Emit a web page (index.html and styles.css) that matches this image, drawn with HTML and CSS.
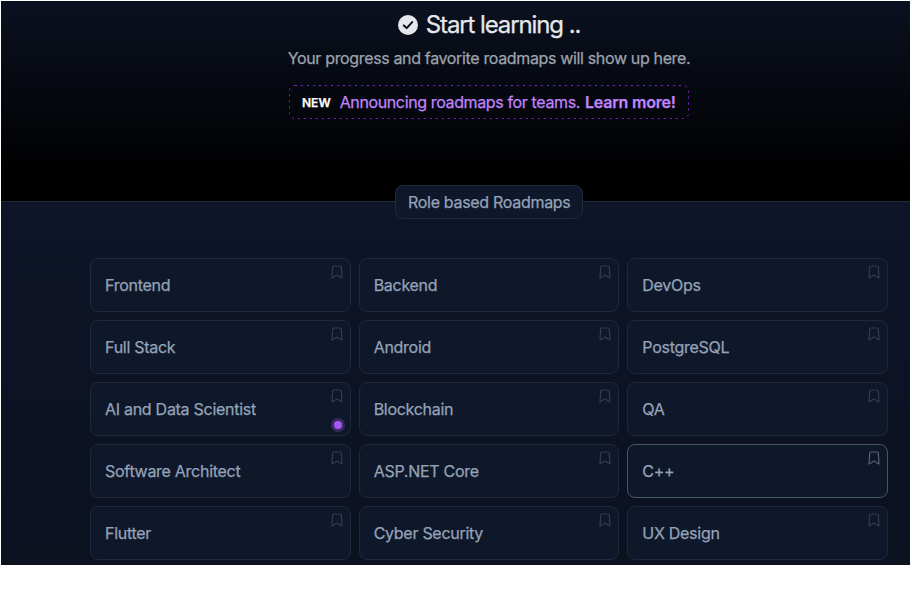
FILE: index.html
```html
<!DOCTYPE html>
<html lang="en">
<head>
<meta charset="utf-8">
<title>Developer Roadmaps</title>
<link rel="stylesheet" href="styles.css">
</head>
<body>
<svg class="defs" width="0" height="0" aria-hidden="true">
  <symbol id="bookmark" viewBox="0 0 24 24"><path d="m19.5 21-7.500-4.500-7.500 4.500L5.500 5a2 2 0 0 1 2-2h9a2 2 0 0 1 2 2z"/></symbol>
</svg>
<main class="page">
  <header class="hero">
    <h1 class="title">
      <svg class="check" viewBox="0 0 20 20"><circle cx="10" cy="10" r="10"/><path d="M5.8 10.4 8.7 13.1 14.2 7.1"/></svg>
      <span>Start learning ..</span>
    </h1>
    <p class="subtitle">Your progress and favorite roadmaps will show up here.</p>
    <a class="announce"><svg class="outline" viewBox="0 0 400 34"><rect x=".5" y=".5" width="399" height="33" rx="5.500"/></svg><span class="new">NEW</span><span class="message">Announcing roadmaps for teams.</span><b class="more">Learn more!</b></a>
  </header>
  <section class="roadmaps">
    <h2 class="heading">Role based Roadmaps</h2>
    <div class="grid">
      <a class="card"><span>Frontend</span><svg class="mark"><use href="#bookmark"/></svg></a>
      <a class="card"><span>Backend</span><svg class="mark"><use href="#bookmark"/></svg></a>
      <a class="card"><span>DevOps</span><svg class="mark"><use href="#bookmark"/></svg></a>
      <a class="card"><span>Full Stack</span><svg class="mark"><use href="#bookmark"/></svg></a>
      <a class="card"><span>Android</span><svg class="mark"><use href="#bookmark"/></svg></a>
      <a class="card"><span>PostgreSQL</span><svg class="mark"><use href="#bookmark"/></svg></a>
      <a class="card"><span>AI and Data Scientist</span><svg class="mark"><use href="#bookmark"/></svg><i class="dot"></i></a>
      <a class="card"><span>Blockchain</span><svg class="mark"><use href="#bookmark"/></svg></a>
      <a class="card"><span>QA</span><svg class="mark"><use href="#bookmark"/></svg></a>
      <a class="card"><span>Software Architect</span><svg class="mark"><use href="#bookmark"/></svg></a>
      <a class="card"><span>ASP.NET Core</span><svg class="mark"><use href="#bookmark"/></svg></a>
      <a class="card active"><span>C++</span><svg class="mark"><use href="#bookmark"/></svg></a>
      <a class="card"><span>Flutter</span><svg class="mark"><use href="#bookmark"/></svg></a>
      <a class="card"><span>Cyber Security</span><svg class="mark"><use href="#bookmark"/></svg></a>
      <a class="card"><span>UX Design</span><svg class="mark"><use href="#bookmark"/></svg></a>
    </div>
  </section>
</main>
</body>
</html>
```
FILE: styles.css
```css
* { box-sizing: border-box; }
body {
  margin: 0;
  background: #fff;
  font: 400 16px/24px Inter, "Liberation Sans", sans-serif;
  -webkit-text-stroke: 0.25px;
}
.defs { display: block; }
.page {
  display: flex;
  flex-direction: column;
  width: 909px;
  height: 564px;
  margin: 1px 0 0 1px;
  overflow: hidden;
}
.hero {
  display: flex;
  flex-direction: column;
  align-items: center;
  flex: none;
  height: 200px;
  padding: 8px 0 0 67px;
  background: linear-gradient(#0b1120, #000 88%);
}
.title {
  display: flex;
  align-items: center;
  gap: 8px;
  height: 32px;
  margin: 0;
  color: #e5e7eb;
  font-size: 24px;
  font-weight: 400;
  letter-spacing: -1.1px;
  white-space: nowrap;
}
.check { width: 20px; height: 20px; fill: #e5e7eb; }
.check path { fill: none; stroke: #0a0f1d; stroke-width: 2; stroke-linecap: round; stroke-linejoin: round; }
.subtitle { margin: 5px 0 15px; color: #9ca3af; letter-spacing: -0.35px; white-space: nowrap; }
.announce {
  position: relative;
  display: flex;
  align-items: center;
  width: 400px;
  height: 34px;
  padding: 0 13px;
  color: #c084fc;
  white-space: nowrap;
}
.outline {
  position: absolute;
  inset: 0;
  width: 400px;
  height: 34px;
  fill: none;
  stroke: #7e22ce;
  stroke-dasharray: 2 4;
}
.new { margin: 2px 9px 0 0; color: #fff; font-size: 12px; font-weight: 600; }
.message { margin-right: 5px; letter-spacing: -0.37px; }
.more { font-weight: 600; letter-spacing: -0.2px; }
.roadmaps {
  display: flex;
  flex-direction: column;
  align-items: center;
  flex: 1;
  padding: 0 22px 0 89px;
  border-top: 1px solid #1e293b;
  background: linear-gradient(#0e1528, #0c1120);
}
.heading {
  width: 188px;
  height: 34px;
  margin: -17px 0 39px;
  padding: 4px 12px;
  border: 1px solid #1e293b;
  border-radius: 8px;
  background: #0f172a;
  color: #94a3b8;
  font-size: 16px;
  font-weight: 400;
  letter-spacing: -0.3px;
  white-space: nowrap;
}
.grid {
  display: grid;
  grid-template-columns: repeat(3, 1fr);
  grid-auto-rows: 54px;
  gap: 8px;
  width: 100%;
}
.card {
  position: relative;
  display: flex;
  align-items: center;
  padding: 0 14px;
  border: 1px solid #1e293b;
  border-radius: 8px;
  background: #0f172a;
  color: #94a3b8;
  letter-spacing: -0.28px;
}
.card.active { border-color: #475569; }
.mark {
  position: absolute;
  top: 5px;
  right: 5px;
  width: 16px;
  height: 16px;
  fill: none;
  stroke: #333d4f;
  stroke-width: 1.8;
  stroke-linecap: round;
  stroke-linejoin: round;
}
.active .mark { stroke: #566174; }
.dot {
  position: absolute;
  right: 5px;
  bottom: 3px;
  width: 14px;
  height: 14px;
  border: 3px solid #392a60;
  border-radius: 50%;
  background: #a855f7;
}
```
